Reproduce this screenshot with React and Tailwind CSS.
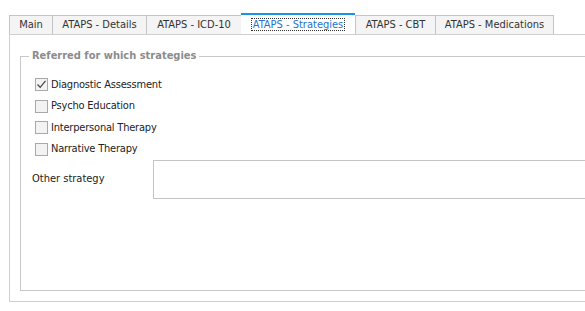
import React from "react";

const tabs = [
  { label: "Main", w: 44 },
  { label: "ATAPS - Details", w: 95 },
  { label: "ATAPS - ICD-10", w: 96 },
  { label: "ATAPS - Strategies", w: 114, active: true },
  { label: "ATAPS - CBT", w: 81 },
  { label: "ATAPS - Medications", w: 119 },
];

const items = [
  { label: "Diagnostic Assessment", checked: true },
  { label: "Psycho Education" },
  { label: "Interpersonal Therapy" },
  { label: "Narrative Therapy" },
];

function Box({ checked }) {
  return (
    <span className="w-[13px] h-[13px] border border-[#a9a9a9] bg-[#f3f3f3] flex items-center justify-center shrink-0">
      {checked && (
        <svg width="11" height="11" viewBox="0 0 11 11">
          <path d="M1.5 5.5 L4.2 8.3 L9.5 1.8" fill="none" stroke="#4a4a4a" strokeWidth="1.3" />
        </svg>
      )}
    </span>
  );
}

export default function App() {
  return (
    <div
      className="w-[585px] h-[311px] bg-white overflow-hidden text-[11px] text-[#222] font-stretch-condensed"
      style={{ fontFamily: '"DejaVu Sans Condensed", "DejaVu Sans", sans-serif' }}
    >
      <div className="pl-[9px] pt-[13px]">
        <div className="flex items-end h-[21px]">
          {tabs.map((t) =>
            t.active ? (
              <div
                key={t.label}
                style={{ width: t.w }}
                className="h-[21px] bg-white border-t-2 border-[#1a93e6] flex items-center justify-center shrink-0"
              >
                <span className="text-[#1e73d4] border border-dotted border-[#333] px-[1px] leading-[11px] h-[13px] flex items-center">
                  {t.label}
                </span>
              </div>
            ) : (
              <div
                key={t.label}
                style={{ width: t.w }}
                className="h-[19px] bg-[#f4f4f4] border border-b-0 border-[#c4c4c4] -mr-[1px] flex items-center justify-center shrink-0 text-[#333]"
              >
                {t.label}
              </div>
            )
          )}
        </div>
        <div className="w-[600px] h-[268px] border-l border-t border-b border-[#cfcfcf] pl-[10px] pt-[14px]">
          <fieldset className="w-[600px] h-[242px] border-l border-t border-b border-[#c8c8c8] pl-[14px]">
            <legend className="-ml-[6px] px-[3px] font-bold text-[#8c8c8c] text-[11px] leading-[14px]">
              Referred for which strategies
            </legend>
            <div className="pt-[11px] flex flex-col">
              {items.map((it) => (
                <div key={it.label} className="h-[21.5px] flex items-center gap-[3px]">
                  <Box checked={it.checked} />
                  <span className="tracking-[-0.2px]">{it.label}</span>
                </div>
              ))}
            </div>
            <div className="flex items-center -ml-[3px]">
              <span className="w-[121px]">Other strategy</span>
              <div className="w-[500px] h-[39px] border border-[#c4c4c4] bg-white" />
            </div>
          </fieldset>
        </div>
      </div>
    </div>
  );
}
